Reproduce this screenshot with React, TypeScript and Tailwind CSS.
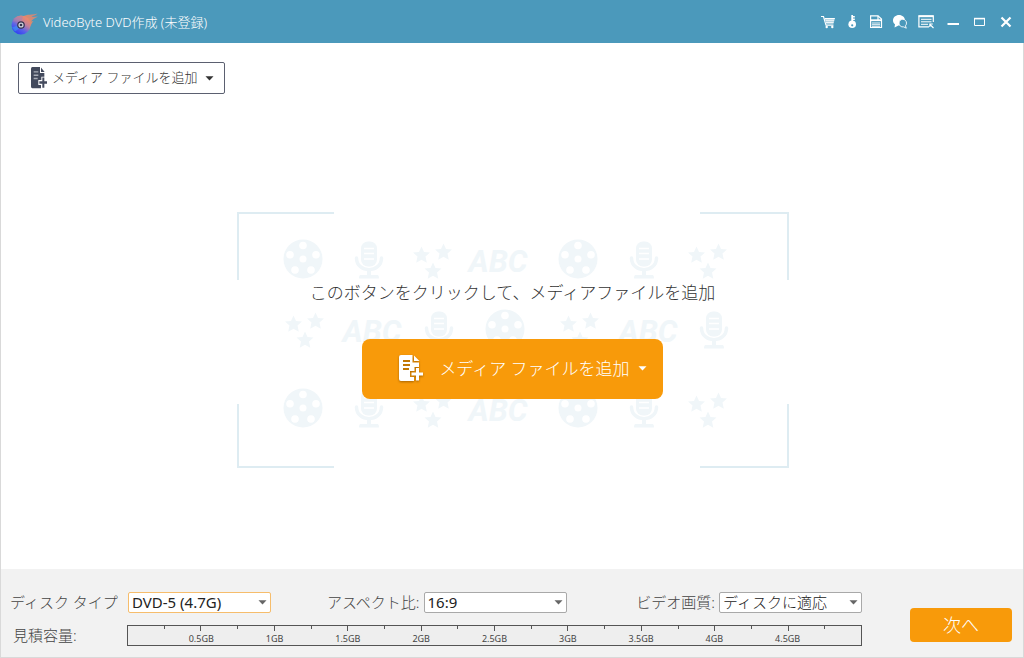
import React from 'react';

const jp = 'font-["Noto_Sans","Noto_Sans_CJK_JP",sans-serif]';

function Logo() {
  return (
    <svg width="28" height="24" viewBox="0 0 28 24" aria-hidden="true">
      <defs>
        <linearGradient id="disc" x1="0.8" y1="0.05" x2="0.2" y2="0.95">
          <stop offset="0" stopColor="#f58b62" />
          <stop offset="0.35" stopColor="#c4809a" />
          <stop offset="0.65" stopColor="#5a63e8" />
          <stop offset="1" stopColor="#2b3df5" />
        </linearGradient>
        <linearGradient id="flame" x1="0" y1="1" x2="1" y2="0">
          <stop offset="0" stopColor="#f58a5c" />
          <stop offset="1" stopColor="#b98a86" />
        </linearGradient>
      </defs>
      <path d="M12 5.500 C16 3 21 4 26.500 2.500 C25 4.500 22 4.500 20.500 6 C22.500 5.800 25 5.500 27 5.500 C24 7.500 21.500 8 20 10.500 L22.500 10 C20.500 12 20 14 18.500 17 Z" fill="url(#flame)" />
      <circle cx="10" cy="14" r="9.500" fill="url(#disc)" />
      <path d="M2 10.500 C4 5.500 8 4.500 12 5.500 L10 10.500 Z" fill="#9d83b5" opacity="0.5" />
      <path d="M1 16.500 L7 14.500 L8 17.500 L4 20.500 Z" fill="#3aa5f5" opacity="0.5" />
      <circle cx="10" cy="14" r="3.800" fill="#33314d" />
      <circle cx="10" cy="14" r="2.600" fill="#cfd5de" />
      <circle cx="10" cy="14" r="1.300" fill="#33314d" />
    </svg>
  );
}

function AddFileIcon({ className, line }: { className: string; line: string }) {
  return (
    <svg className={className} viewBox="0 0 24 27" preserveAspectRatio="none" aria-hidden="true">
      <path d="M2 0 H13.500 V7.500 H20 V12 H15.500 V16 H11 V22 H15 V26 H2 Q0 26 0 24 V2 Q0 0 2 0 Z" fill="currentColor" />
      <path d="M15 0.500 L20.500 6 H15 Z" fill="currentColor" />
      <path d="M17 13 H20 V17.500 H24 V20.500 H20 V25.500 H17 V20.500 H12.500 V17.500 H17 Z" fill="currentColor" />
      <path d="M4 6 H11 M4 10 H11 M4 14 H10" stroke={line} strokeWidth="1.800" />
    </svg>
  );
}

function Caret({ className }: { className: string }) {
  return (
    <svg width="9" height="5" viewBox="0 0 9 5" className={className} aria-hidden="true">
      <path d="M0.500 0.300 H8.500 L4.500 4.500 Z" fill="currentColor" />
    </svg>
  );
}

const toolIcons: { label: string; wide?: boolean; art: React.ReactNode }[] = [
  {
    label: 'カート',
    art: (
      <g>
        <path d="M1 2.500 H3.500 L6 11.200 H13.500" fill="none" stroke="currentColor" strokeWidth="1.200" />
        <path d="M4.500 4 H15 L13.500 9.500 H6.300 Z" fill="currentColor" />
        <path d="M5 5.800 H15 M5.500 7.700 H14" stroke="#4b99bb" strokeWidth="0.500" />
        <circle cx="6.700" cy="13" r="1.200" fill="currentColor" />
        <circle cx="12.300" cy="13" r="1.200" fill="currentColor" />
      </g>
    ),
  },
  {
    label: '登録',
    art: (
      <g>
        <path d="M7.300 1 H9 V2 H10.800 V3.500 H9 V4.500 H10.800 V6 H9 V8 H7.300 Z" fill="currentColor" />
        <circle cx="8.200" cy="10.200" r="3.800" fill="currentColor" />
        <circle cx="8.200" cy="11.300" r="1.100" fill="#4b99bb" />
      </g>
    ),
  },
  {
    label: '保存',
    art: (
      <g fill="none" stroke="currentColor" strokeWidth="1.200">
        <path d="M2.600 1.800 H10 L13.500 5 V13.500 H2.600 Z" />
        <path d="M3 6.200 H13.500" strokeWidth="1.800" />
        <path d="M10 1.800 V6" />
        <path d="M4 9 H12 M4 10.700 H12 M4 12.300 H12" strokeWidth="0.900" />
      </g>
    ),
  },
  {
    label: 'サポート',
    art: (
      <g>
        <path d="M7 1 C10.300 1 13 3.300 13 6.200 C13 9.100 10.300 11.300 7 11.300 L2.500 13.500 L3 10.300 C1.500 9.200 1 7.800 1 6.200 C1 3.300 3.700 1 7 1 Z" fill="currentColor" />
        <path d="M10.800 5.300 C13 5.300 14.500 7 14.500 9.100 C14.500 10.300 14.100 11.100 13.400 11.800 L14.300 14.200 L11.700 12.900 C9 13.300 7 11.500 7 9.100 C7 7 8.600 5.300 10.800 5.300 Z" fill="#4b99bb" stroke="currentColor" strokeWidth="0.900" />
      </g>
    ),
  },
  {
    label: 'メニュー',
    wide: true,
    art: (
      <g fill="none" stroke="currentColor">
        <path d="M11 12.800 H0.900 V1.800 H15.300 V8" strokeWidth="1.200" />
        <path d="M0.700 2.300 H15.300" strokeWidth="1.700" />
        <path d="M3 5.300 H13.500 M3 7.800 H13.500 M3 10.300 H10" strokeWidth="1" />
        <path d="M15.500 14 L12 10.500 M11.800 13 V10 H14.800" strokeWidth="1.100" />
      </g>
    ),
  },
  { label: '最小化', wide: true, art: <path d="M2.500 9 H14 V11 H2.500 Z" fill="currentColor" /> },
  {
    label: '最大化',
    wide: true,
    art: (
      <g fill="none" stroke="currentColor">
        <path d="M2.500 4.500 H12.500 V11.500 H2.500 Z" strokeWidth="1" />
        <path d="M2 4.600 H13" strokeWidth="1.600" />
      </g>
    ),
  },
  { label: '閉じる', wide: true, art: <path d="M2.500 3.500 L11.500 12.500 M11.500 3.500 L2.500 12.500" stroke="currentColor" strokeWidth="2.200" /> },
];

function Reel({ x, y }: { x: number; y: number }) {
  return (
    <g transform={`translate(${x} ${y})`}>
      <circle r="19.500" />
      <g fill="#ffffff">
        <circle r="3.500" />
        <circle cy="-13.500" r="3.800" />
        <circle cx="13" cy="-4.200" r="3.800" />
        <circle cx="8" cy="11" r="3.800" />
        <circle cx="-8" cy="11" r="3.800" />
        <circle cx="-13" cy="-4.200" r="3.800" />
      </g>
    </g>
  );
}

function Mic({ x, y }: { x: number; y: number }) {
  return (
    <g transform={`translate(${x} ${y})`}>
      <rect x="-8" y="-17.500" width="16" height="25" rx="7" />
      <path d="M-5 -10.500 H5 M-5 -5.500 H5 M-5 0 H5" stroke="#ffffff" strokeWidth="1.400" />
      <path d="M-12.500 -1 C-12.500 14.500 12.500 14.500 12.500 -1" fill="none" stroke="#f0f6f9" strokeWidth="3.500" strokeLinecap="round" />
      <path d="M-2 10 H2 V16 H8.500 Q10 16 10 19.500 H-10 Q-10 16 -8.500 16 H-2 Z" />
    </g>
  );
}

const star = 'M0 -8.500 L2.500 -3 L8.500 -2.400 L4 1.600 L5.300 7.700 L0 4.700 L-5.300 7.700 L-4 1.600 L-8.500 -2.400 L-2.500 -3 Z';

function Stars({ x, y }: { x: number; y: number }) {
  return (
    <g transform={`translate(${x} ${y})`}>
      <path d={star} transform="translate(-11.500 -4)" />
      <path d={star} transform="translate(10.500 -7)" />
      <path d={star} transform="translate(0 12)" />
    </g>
  );
}

function Abc({ x, y }: { x: number; y: number }) {
  return (
    <text x={x} y={y + 12} textAnchor="middle" className='font-[Roboto,"Liberation_Sans",sans-serif] text-[31px] font-bold italic'>
      ABC
    </text>
  );
}

function Backdrop() {
  return (
    <svg className="absolute inset-0" width="552" height="256" viewBox="0 0 552 256" fill="#f0f6f9" aria-hidden="true">
      <path d="M97 1 H1 V68 M463 1 H551 V68 M1 192 V255 H97 M551 192 V255 H463" fill="none" stroke="#deecf2" strokeWidth="2" />
      {[47, 196].map((y) => (
        <g key={y}>
          <Reel x={66} y={y} />
          <Mic x={132} y={y} />
          <Stars x={196} y={y} />
          <Abc x={261} y={y + 1} />
          <Reel x={341} y={y} />
          <Mic x={407} y={y} />
          <Stars x={471} y={y} />
        </g>
      ))}
      <Stars x={68} y={116} />
      <Abc x={135} y={118} />
      <Mic x={202} y={117} />
      <Reel x={268} y={117} />
      <Stars x={343} y={116} />
      <Abc x={411} y={118} />
      <Mic x={477} y={117} />
    </svg>
  );
}

function Picker({ id, options, active, light }: { id: string; options: string[]; active?: boolean; light?: boolean }) {
  return (
    <div className="relative w-[143px] justify-self-end">
      <select
        id={id}
        className={
          (active ? 'border-[#f6bd6c] ' : 'border-[#a9a9a9] ') +
          (light ? 'font-light ' : 'font-normal ') +
          'block h-[21px] w-full appearance-none rounded-xs border bg-white pl-[3px] pr-5 text-[15px] leading-[19px] text-[#222222] outline-none'
        }
      >
        {options.map((o) => (
          <option key={o}>{o}</option>
        ))}
      </select>
      <Caret className="pointer-events-none absolute right-1 top-2 text-[#666666]" />
    </div>
  );
}

const sizes = ['0.5GB', '1GB', '1.5GB', '2GB', '2.5GB', '3GB', '3.5GB', '4GB', '4.5GB'];
const ticks = Array.from({ length: 19 }, (_, i) => i);

function Ruler() {
  return (
    <div className="col-span-3 flex h-[21px] flex-col justify-between border border-[#555555] bg-[#eeeeee]">
      <div className="flex">
        {ticks.map((i) => (
          <div key={i} className={(i % 2 ? 'h-[5px] ' : 'h-[3px] ') + 'flex-1 border-r border-[#555555]'} />
        ))}
        <div className="flex-1" />
      </div>
      <div className="flex px-[5%] text-center text-[9px] font-normal leading-[13px] text-[#444444]">
        {sizes.map((s) => (
          <span key={s} className="flex-1">{s}</span>
        ))}
      </div>
    </div>
  );
}

export default function App() {
  return (
    <div className={`${jp} flex min-h-screen flex-col bg-white`}>
      <header className="flex h-[43px] items-center justify-between bg-[#4b99bb] pl-[11px] pr-1 text-white">
        <div className="flex items-center gap-1 pt-0.5">
          <Logo />
          <h1 className="text-[13px] font-light">VideoByte DVD作成 (未登録)</h1>
        </div>
        <div className="flex">
          {toolIcons.map((t) => (
            <button key={t.label} type="button" aria-label={t.label} className={(t.wide ? 'w-[27px] ' : 'w-6 ') + 'flex h-6 items-center justify-center'}>
              <svg width="16" height="16" viewBox="0 0 16 16" aria-hidden="true">{t.art}</svg>
            </button>
          ))}
        </div>
      </header>

      <main className="flex flex-1 flex-col border-x border-[#d9d9d9]">
        <div className="px-[17px] pt-[19px]">
          <button type="button" className="flex h-8 items-center rounded-xs border border-[#5b6070] bg-white pl-3 pr-[10px] text-[13px] font-light text-[#333333]">
            <AddFileIcon className="mr-[5px] h-[22px] w-4 text-[#434a5d]" line="#a9adb8" />
            メディア ファイルを追加
            <Caret className="ml-2 text-[#333333]" />
          </button>
        </div>

        <div className="flex flex-1 items-center justify-center pl-px pt-4">
          <div className="relative flex h-64 w-[552px] flex-col items-center pt-[69px]">
            <Backdrop />
            <p className="relative text-[17px] font-light leading-6 text-[#333333]">このボタンをクリックして、メディアファイルを追加</p>
            <button type="button" className="relative mt-[34px] flex h-[60px] items-center rounded-lg bg-[#f89a0a] pl-[37px] pr-4 text-[17px] font-light text-white">
              <AddFileIcon className="mr-4 h-[27px] w-6 drop-shadow-[0_1px_1px_#a86500]" line="#c27805" />
              メディア ファイルを追加
              <Caret className="ml-2" />
            </button>
          </div>
        </div>
      </main>

      <footer className="flex border border-t-0 border-[#d9d9d9] bg-[#f2f2f2] pb-[11px] pl-[9px] pr-[11px] pt-[23px] text-[15px] font-light text-[#444444]">
        <div className="grid flex-1 grid-cols-[117px_144px_1fr_1fr] items-center gap-y-3 leading-[21px]">
          <label htmlFor="disc-type">ディスク タイプ</label>
          <Picker id="disc-type" options={['DVD-5 (4.7G)', 'DVD-9 (8.5G)']} active />
          <div className="flex items-center justify-end gap-1">
            <label htmlFor="aspect">アスペクト比:</label>
            <Picker id="aspect" options={['16:9', '4:3']} />
          </div>
          <div className="flex items-center justify-end gap-1">
            <label htmlFor="quality">ビデオ画質:</label>
            <Picker id="quality" options={['ディスクに適応', '高品質']} light />
          </div>
          <span className="pl-[3px]">見積容量:</span>
          <Ruler />
        </div>
        <button type="button" className="mb-1 ml-12 h-[34px] w-[102px] self-end rounded-sm bg-[#f89a0a] text-[18px] font-light text-white">次へ</button>
      </footer>
    </div>
  );
}
